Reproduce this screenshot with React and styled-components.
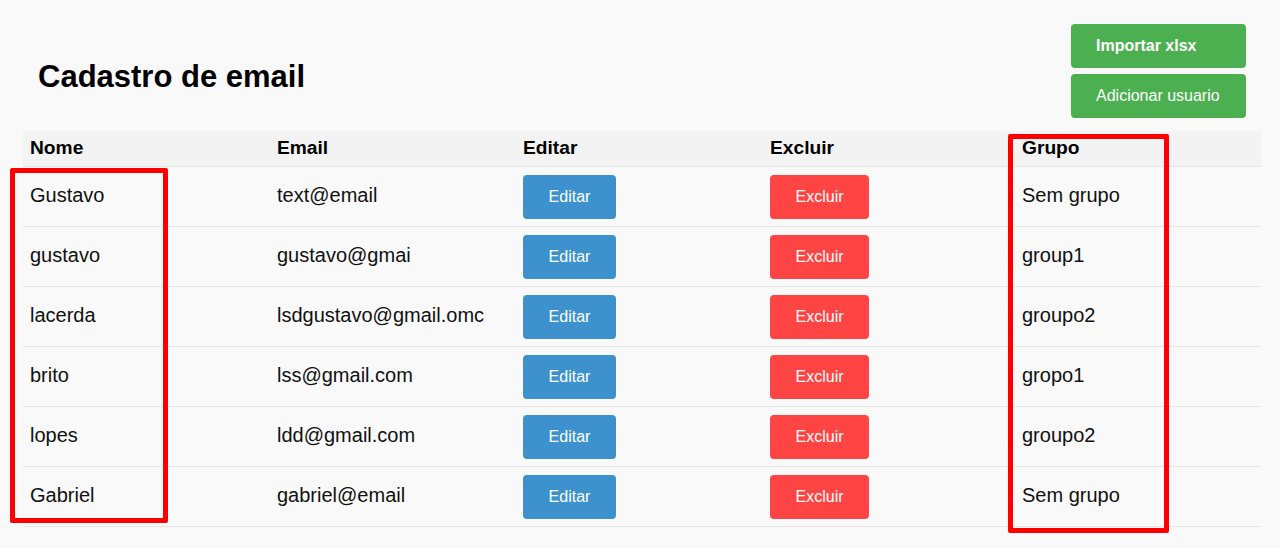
import React from "react";
import styled, { createGlobalStyle } from "styled-components";

const Global = createGlobalStyle`
  html, body { margin: 0; padding: 0; background: #f9f9f9; }
  body { font-family: "Liberation Sans", Arial, sans-serif; color: #111; }
`;

const Page = styled.div`
  position: relative;
  width: 1280px;
  height: 548px;
  box-sizing: border-box;
  padding: 24px 19px 0 23px;
  background: #f9f9f9;
  overflow: hidden;
`;

const TopBar = styled.header`
  display: flex;
  justify-content: space-between;
  align-items: flex-start;
  padding: 0 15px 0 15px;
`;

const Title = styled.h1`
  margin: 34.6px 0 0;
  font-size: 31px;
  line-height: 35.6px;
  font-weight: 700;
  color: #000;
`;

const Actions = styled.div`
  display: flex;
  flex-direction: column;
  gap: 6px;
  width: 175px;
`;

const GreenButton = styled.button`
  height: 44px;
  padding: 0 25px;
  border: none;
  border-radius: 4px;
  background: #4caf50;
  color: #fff;
  font-family: "Liberation Sans", Arial, sans-serif;
  font-size: 16px;
  font-weight: ${(p) => (p.$bold ? 700 : 400)};
  text-align: left;
  cursor: pointer;
`;

const Table = styled.table`
  margin-top: 13px;
  width: 1238px;
  border-collapse: collapse;
  table-layout: fixed;
`;

const HeadRow = styled.tr`
  background: #f3f3f3;
  border-bottom: 1px solid #e6e6e6;
`;

const Th = styled.th`
  height: 35px;
  padding: 0 7px;
  text-align: left;
  vertical-align: middle;
  font-size: 19.2px;
  font-weight: 700;
  color: #000;
  box-sizing: border-box;
`;

const Row = styled.tr`
  border-bottom: 1px solid #e6e6e6;
`;

const Td = styled.td`
  height: 60px;
  padding: 0 7px 1px;
  vertical-align: middle;
  font-size: 20px;
  color: #111;
  box-sizing: border-box;
`;

const ActionButton = styled.button`
  margin-top: 3px;
  height: 44px;
  padding: 0 25.6px;
  border: none;
  border-radius: 4px;
  background: ${(p) => (p.$variant === "danger" ? "#ff4444" : "#3d91cc")};
  color: #fff;
  font-family: "Liberation Sans", Arial, sans-serif;
  font-size: 16px;
  cursor: pointer;
`;

const Highlight = styled.div`
  position: absolute;
  box-sizing: border-box;
  border: 5px solid #ff0000;
  border-radius: 2px;
  pointer-events: none;
`;

const users = [
  { nome: "Gustavo", email: "text@email", grupo: "Sem grupo" },
  { nome: "gustavo", email: "gustavo@gmai", grupo: "group1" },
  { nome: "lacerda", email: "lsdgustavo@gmail.omc", grupo: "groupo2" },
  { nome: "brito", email: "lss@gmail.com", grupo: "gropo1" },
  { nome: "lopes", email: "ldd@gmail.com", grupo: "groupo2" },
  { nome: "Gabriel", email: "gabriel@email", grupo: "Sem grupo" },
];

export default function App() {
  return (
    <>
      <Global />
      <Page>
        <TopBar>
          <Title>Cadastro de email</Title>
          <Actions>
            <GreenButton $bold>Importar xlsx</GreenButton>
            <GreenButton>Adicionar usuario</GreenButton>
          </Actions>
        </TopBar>
        <Table>
          <colgroup>
            <col style={{ width: "247px" }} />
            <col style={{ width: "246px" }} />
            <col style={{ width: "247px" }} />
            <col style={{ width: "252px" }} />
            <col />
          </colgroup>
          <thead>
            <HeadRow>
              <Th>Nome</Th>
              <Th>Email</Th>
              <Th>Editar</Th>
              <Th>Excluir</Th>
              <Th>Grupo</Th>
            </HeadRow>
          </thead>
          <tbody>
            {users.map((u, i) => (
              <Row key={i}>
                <Td>{u.nome}</Td>
                <Td>{u.email}</Td>
                <Td>
                  <ActionButton>Editar</ActionButton>
                </Td>
                <Td>
                  <ActionButton $variant="danger">Excluir</ActionButton>
                </Td>
                <Td>{u.grupo}</Td>
              </Row>
            ))}
          </tbody>
        </Table>
        <Highlight style={{ left: 9.5, top: 167.7, width: 158, height: 355.6 }} />
        <Highlight style={{ left: 1008.3, top: 134, width: 160.7, height: 398.7 }} />
      </Page>
    </>
  );
}
